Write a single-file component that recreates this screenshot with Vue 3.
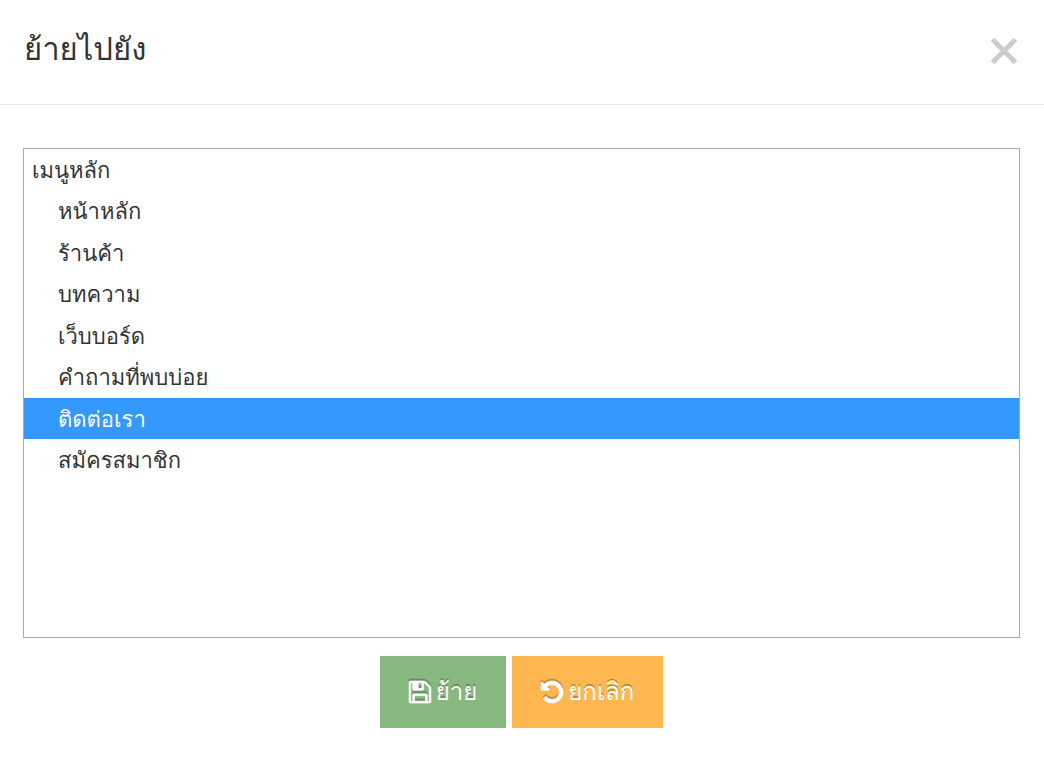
<script setup>
import { ref } from 'vue'

const items = [
  { id: 0, label: 'เมนูหลัก' },
  { id: 1, label: 'หน้าหลัก', child: true },
  { id: 2, label: 'ร้านค้า', child: true },
  { id: 3, label: 'บทความ', child: true },
  { id: 4, label: 'เว็บบอร์ด', child: true },
  { id: 5, label: 'คำถามที่พบบ่อย', child: true },
  { id: 6, label: 'ติดต่อเรา', child: true },
  { id: 7, label: 'สมัครสมาชิก', child: true },
]
const target = ref(6)
</script>

<template>
  <section class="dialog" role="dialog" aria-labelledby="move-title">
    <header class="head">
      <h1 id="move-title">ย้ายไปยัง</h1>
      <button class="close" type="button" aria-label="ปิด">
        <svg viewBox="0 0 28 28" width="28" height="28" aria-hidden="true">
          <path d="M2.500 2.500 25.500 25.500M25.500 2.500 2.500 25.500" stroke="currentColor" stroke-width="5" fill="none" />
        </svg>
      </button>
    </header>
    <form class="body" @submit.prevent>
      <select v-model="target" class="list" size="8" aria-labelledby="move-title">
        <option v-for="item in items" :key="item.id" :value="item.id" :class="{ child: item.child }">{{ item.label }}</option>
      </select>
      <div class="actions">
        <button class="btn move" type="submit">
          <svg viewBox="0 128 1536 1536" width="22" height="22" aria-hidden="true">
            <path fill="currentColor" stroke="currentColor" stroke-width="50" d="M384 1536h768v-384h-768v384zm896 0h128v-896q0-14-10-38.500t-20-34.500l-281-281q-10-10-34-20t-39-10v416q0 40-28 68t-68 28h-576q-40 0-68-28t-28-68v-416h-128v1280h128v-416q0-40 28-68t68-28h832q40 0 68 28t28 68v416zm-384-928v-320q0-13-9.500-22.500t-22.500-9.500h-192q-13 0-22.500 9.500t-9.500 22.500v320q0 13 9.500 22.500t22.500 9.500h192q13 0 22.500-9.500t9.500-22.500zm640 32v928q0 40-28 68t-68 28h-1344q-40 0-68-28t-28-68v-1344q0-40 28-68t68-28h928q40 0 88 20t76 48l280 280q28 28 48 76t20 88z" />
          </svg>
          <span>ย้าย</span>
        </button>
        <button class="btn cancel" type="button">
          <svg viewBox="0 128 1536 1536" width="22" height="22" aria-hidden="true">
            <path fill="currentColor" stroke="currentColor" stroke-width="50" d="M1536 896q0 156-61 298t-164 245-245 164-298 61q-172 0-327-72.500t-264-204.500q-7-10-6.500-22.500t8.500-20.500l137-138q10-9 25-9 16 2 23 12 73 95 179 147t225 52q104 0 198.500-40.500t163.500-109.500 109.500-163.500 40.500-198.500-40.500-198.500-109.500-163.500-163.500-109.500-198.500-40.500q-98 0-188 35.500t-160 101.500l137 138q31 30 14 69-17 40-59 40h-448q-26 0-45-19t-19-45v-448q0-42 40-59 39-17 69 14l130 129q107-101 244.500-156.500t284.500-55.500q156 0 298 61t245 164 164 245 61 298z" />
          </svg>
          <span>ยกเลิก</span>
        </button>
      </div>
    </form>
  </section>
</template>

<style>
body {
  background: #fff;
}
</style>

<style scoped>
.dialog,
.list,
.btn {
  font-family: Loma, "DejaVu Sans", sans-serif;
}
.dialog {
  color: #333;
}
.head {
  display: flex;
  align-items: center;
  justify-content: space-between;
  padding: 22px 26px 24px 24px;
  border-bottom: 1px solid #e5e5e5;
}
h1 {
  margin: 0;
  padding-bottom: 4px;
  font-size: 31px;
  font-weight: 400;
  line-height: 54px;
}
.close {
  display: flex;
  padding: 0;
  border: 0;
  background: none;
  color: #ccc;
}
.body {
  padding: 43px 24px 42px 23px;
}
.list {
  display: block;
  box-sizing: border-box;
  width: 100%;
  height: 490px;
  padding: 0;
  border: 1px solid #aaa;
  border-radius: 0;
  outline: 0;
  background: #fff;
  color: #333;
  font-size: 22px;
  overflow: hidden;
}
.list option {
  min-height: 0;
  padding: 4px 8px 2px;
  color: #333;
}
.list option:nth-child(even) {
  padding-bottom: 3px;
}
.list option.child {
  padding-left: 34px;
}
.list option:checked {
  background: #39f linear-gradient(#39f, #39f);
  color: #fff;
}
.actions {
  display: flex;
  justify-content: center;
  gap: 6px;
  margin-top: 18px;
}
.btn {
  display: flex;
  align-items: center;
  gap: 5px;
  height: 72px;
  padding: 0 29px;
  border: 0;
  color: #fff;
  font-size: 24px;
  line-height: 36px;
  text-shadow: 0 -2px 0 rgba(0, 0, 0, 0.25);
}
.btn svg {
  overflow: visible;
  filter: drop-shadow(0 -2px 0 rgba(0, 0, 0, 0.25));
}
.move {
  background: #87b87f;
}
.cancel {
  background: #ffb752;
}
</style>
